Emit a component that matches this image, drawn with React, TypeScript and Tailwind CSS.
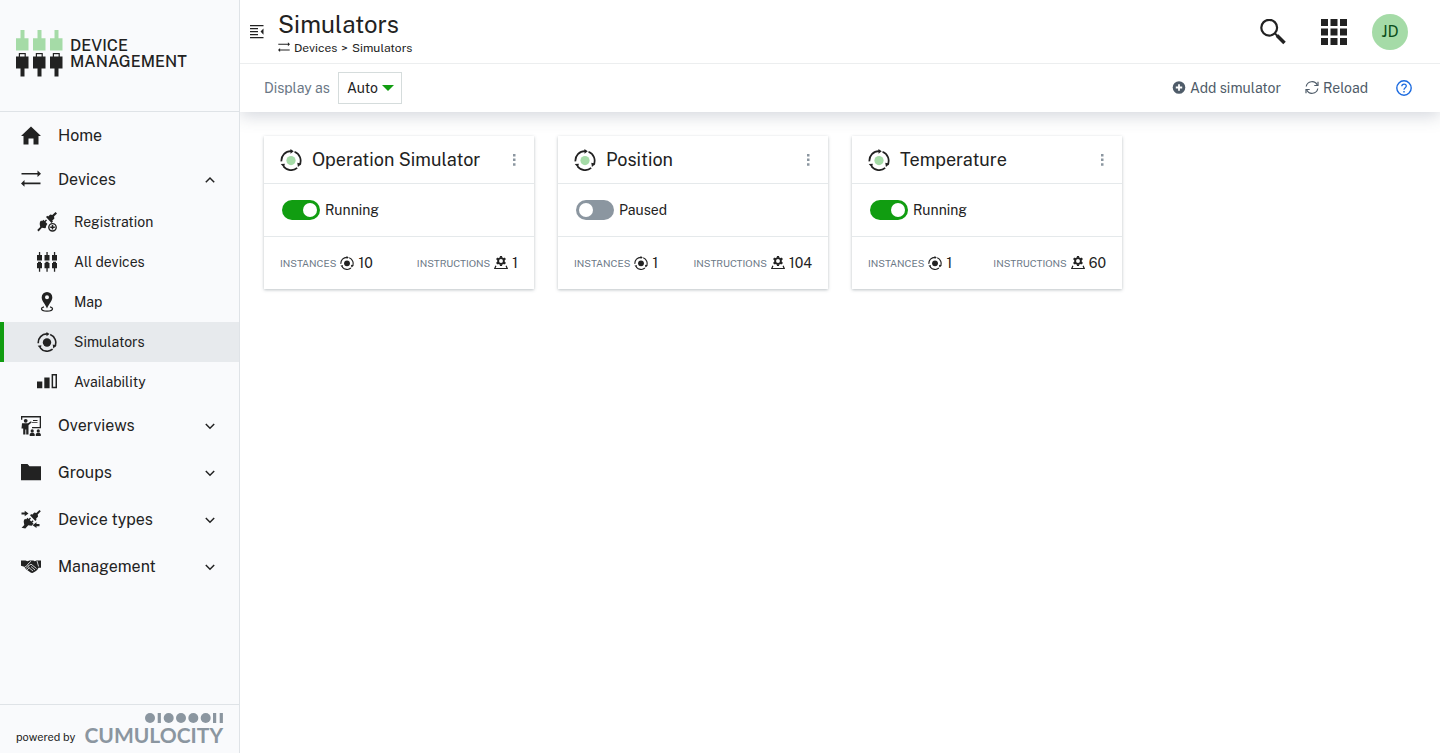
import type { ReactNode } from "react"
import { clsx } from "clsx"

type IconProps = { className?: string }

const LogoIcon = () => (
  <svg viewBox="0 0 47 47" className="h-[47px] w-[47px] shrink-0" aria-hidden="true">
    {[0, 17, 34].map((x) => (
      <g key={x} transform={`translate(${x} 0)`}>
        <path fill="#a5dba7" d="M4.500 0h4v8.300h4v12.200H0V8.300h4.500z" />
        <path fill="#222" d="M2.800 23h7v3.500h2.700v12h-4v8h-4v-8H0v-12h2.800z" />
        <path fill="#f9fafc" d="M4 24.200h4.600v2.300H4z" />
      </g>
    ))}
  </svg>
)

const HomeIcon = ({ className }: IconProps) => (
  <svg viewBox="0 0 20 20" className={className} fill="currentColor" aria-hidden="true">
    <path d="M10 .5 20 10h-2.500v8.500h-5v-6h-5v6h-5V10H0z" />
  </svg>
)

const ExchangeIcon = ({ className }: IconProps) => (
  <svg viewBox="0 0 20 20" className={className} fill="currentColor" aria-hidden="true">
    <path d="M.5 3h16V.5L20 3.800l-3.500 3.300V4.600H.5zM19.500 12.600h-16v-2.500L0 13.400l3.500 3.300v-2.500h16z" />
  </svg>
)

const RegistrationIcon = ({ className }: IconProps) => (
  <svg viewBox="0 0 20 20" className={className} aria-hidden="true">
    <g fill="currentColor">
      <path d="m9 5 1.300-1.300.8.800 2.200-2.100 2 .6L18.600 0 20 1.400 17 4.500l.4 2-2.200 2.200.8.800-1.500 1.500z" />
      <path d="m3 9.700 1.200-1.200.8.700 1.300-1.400 1.200 1.200 1.500-1.500 1 1-1.500 1.500 1.900 1.900c-1 1-1.500 2.200-1.500 3.600l-.7.700-3.300-.5L1.600 19.500.2 18.100l3-3-.5-3z" />
    </g>
    <circle cx="15.500" cy="15.300" r="3.700" fill="none" stroke="currentColor" strokeWidth="1.400" />
    <path d="M15.500 13v4.600M13.200 15.300h4.600" stroke="currentColor" strokeWidth="1.500" />
  </svg>
)

const DevicesIcon = ({ className }: IconProps) => (
  <svg viewBox="0 0 20 20" className={className} fill="currentColor" aria-hidden="true">
    {[0, 7.500, 15].map((x) => (
      <path
        key={x}
        transform={`translate(${x} 0)`}
        d="M1.900 0h1.300v3H5v5.600H0V3h1.900zM1 9.700h3V11h1v5.200H3.200v3.600H1.900v-3.600H0V11h1z"
      />
    ))}
  </svg>
)

const MapIcon = ({ className }: IconProps) => (
  <svg viewBox="0 0 20 20" className={className} aria-hidden="true">
    <path
      fill="currentColor"
      fillRule="evenodd"
      d="M10 0a5.300 5.300 0 0 1 5.300 5.400C15.300 9 12 11.500 10 16.500 8 11.500 4.700 9 4.700 5.400A5.300 5.300 0 0 1 10 0zm0 3.300a2 2 0 1 0 0 4 2 2 0 0 0 0-4z"
    />
    <path
      fill="none"
      stroke="currentColor"
      strokeWidth="1.300"
      d="M7 14.900c-1.500.4-2.500 1-2.500 1.800 0 1.300 2.500 2.400 5.500 2.400s5.500-1.100 5.500-2.400c0-.8-1-1.400-2.500-1.800"
    />
  </svg>
)

const SimulatorIcon = ({ className, dot = "currentColor" }: IconProps & { dot?: string }) => (
  <svg viewBox="0 0 20 20" className={className} aria-hidden="true">
    <circle cx="10" cy="10.500" r="4.200" fill={dot} />
    <path
      fill="none"
      stroke="currentColor"
      strokeWidth="1.600"
      d="M1.300 11.200A8.600 8.600 0 0 1 10 1.900M13.200 2.500a8.600 8.600 0 0 1 4.600 12M15.600 17.200a8.600 8.600 0 0 1-12.300-1.300"
    />
    <path fill="currentColor" d="m9.500 0 3 2-3 2.300zM19.600 13.500l-3.300 2.900-.6-3.900zM.7 13.700l3.700-.4L3.700 17z" />
  </svg>
)

const AvailabilityIcon = ({ className }: IconProps) => (
  <svg viewBox="0 0 20 20" className={className} fill="currentColor" aria-hidden="true">
    <path
      fillRule="evenodd"
      d="M0 9.500h5.300v6.700H0zM7.300 5.500h5.300v10.700H7.300zM14.600 2H20v14.200h-5.400zm1.500 1.500v11.200h2.400V3.500z"
    />
  </svg>
)

const OverviewsIcon = ({ className }: IconProps) => (
  <svg viewBox="0 0 20 20" className={className} fill="currentColor" aria-hidden="true">
    <path d="M0 0h20v12.300h-9v-1.200h7.700V1.500H1.300v2.300H0z" />
    <circle cx="4.700" cy="4.800" r="1.900" />
    <path d="M1 7.300h6l3-2 .8 1-3.300 2.900v9.300H5.200v-5h-.8v5H2.200v-6H.5z" />
    <path d="M12 4h4.500v.9H12zM11 6.200h5.500v.8H11z" />
    <circle cx="11.200" cy="14.900" r="1.600" />
    <circle cx="17.300" cy="14.900" r="1.600" />
    <path d="M8.700 20v-2l1.300-1.200h2.400l1.300 1.200v2zM14.800 20v-2l1.300-1.200h2.400l1.300 1.200v2z" />
  </svg>
)

const FolderIcon = ({ className }: IconProps) => (
  <svg viewBox="0 0 20 20" className={className} fill="currentColor" aria-hidden="true">
    <path d="M0 1h6.500l2 2.300H20v14H0z" />
  </svg>
)

const DeviceTypesIcon = ({ className }: IconProps) => (
  <svg viewBox="0 0 20 20" className={className} fill="currentColor" aria-hidden="true">
    <path d="m9 5.300 1.300-1.300.8.700 2.300-2.100 1.900.5L18.500 0l1.300 1.300-3.100 3.200.4 2.100-2.200 2.300.8.800-1.400 1.300z" />
    <path d="m3 9.900 1.200-1.200.8.700 1.500-1.600 1.200 1.200 1.300-1.400 1 1-1.300 1.400 1.600 1.600 1.300-1.300 1 1-1.300 1.300 1.200 1.200-1.900 1.900-3.300-.4-3 3.300L.6 17.700l2.700-2.800-.6-3.100z" />
    <path d="M.5 2.400h3.200V.7l3.800 2.800-3.800 2.800V4.600H.5zM18.500 14h-3v-1.700l-3.900 2.900 3.900 2.800v-1.700h3z" />
  </svg>
)

const HandshakeIcon = ({ className }: IconProps) => (
  <svg viewBox="0 0 20 20" className={className} aria-hidden="true">
    <path
      fill="currentColor"
      d="M0 3.500h4.500l2 .8 2-.9h3.800l1.500.8 1.700-.7H20v7.200h-2.500l-1.300 2.300-2 1.500-2.700 1.600-1.500-.3L5 12.300 3.300 9.800 0 8.800z"
    />
    <path
      fill="none"
      stroke="#f9fafc"
      strokeWidth=".8"
      d="M10 4.200 6.500 7.500c.8 1.300 2.300 1.100 3.500-.4l5.500 4.400M10 9.500l4 3.500M8.300 11l3.700 3M3.700 10.200l2.500-1.700 1 1-2.400 2.200M7.200 9.700l1.200 1-2.400 2.400M16 4l1.600 5.500"
    />
  </svg>
)

const GearIcon = ({ className }: IconProps) => (
  <svg viewBox="0 0 14 14" className={className} aria-hidden="true">
    <circle cx="7" cy="5" r="2.900" fill="none" stroke="currentColor" strokeWidth="1.900" />
    <path
      stroke="currentColor"
      strokeWidth="2.200"
      d="M7 0v1.800M7 8.200V10M2.600 2.400l1.600 1M9.800 6.600l1.600 1M2.600 7.600l1.600-1M9.800 3.400l1.600-1"
    />
    <path fill="none" stroke="currentColor" strokeWidth="1.200" d="M1.900 9.800.8 12.500h12.400l-1.100-2.700" />
  </svg>
)

const Chevron = ({ up }: { up?: boolean }) => (
  <svg viewBox="0 0 10 10" className="ml-auto h-2.5 w-2.5 shrink-0" fill="none" stroke="currentColor" strokeWidth="1.500" aria-hidden="true">
    <path d={up ? "M.8 7.200 5 3l4.200 4.200" : "M.8 3 5 7.200 9.200 3"} />
  </svg>
)

const CollapseIcon = () => (
  <svg viewBox="0 0 14 14" className="h-3.5 w-3.5" fill="currentColor" aria-hidden="true">
    <path d="M0 0h13.500v1.300H0zM0 3h8v1.300H0zM0 6h8v1.300H0zM0 9h8v1.300H0zM0 12h13.500v1.300H0zM13.500 3.500v6.300L10.500 6.600z" />
  </svg>
)

const SearchIcon = () => (
  <svg viewBox="0 0 26 26" className="h-[26px] w-[26px]" fill="none" stroke="currentColor" aria-hidden="true">
    <circle cx="9.200" cy="8.700" r="7.900" strokeWidth="2.200" />
    <path d="m15 14.500 2.500 2.500" strokeWidth="2" />
    <path d="m17 16.500 7.500 7.500" strokeWidth="3.600" />
  </svg>
)

const AppsIcon = () => (
  <svg viewBox="0 0 26 26" className="h-[26px] w-[26px]" fill="currentColor" aria-hidden="true">
    {[0, 9.500, 19].map((y) => [0, 9.500, 19].map((x) => <rect key={`${x}-${y}`} x={x} y={y} width="7" height="7" />))}
  </svg>
)

const PlusIcon = () => (
  <svg viewBox="0 0 14 14" className="h-3.5 w-3.5" aria-hidden="true">
    <circle cx="7" cy="6.500" r="6.300" fill="currentColor" />
    <path d="M7 3.300v6.400M3.800 6.500h6.400" stroke="#fff" strokeWidth="1.800" />
  </svg>
)

const ReloadIcon = () => (
  <svg viewBox="0 0 14 14" className="h-3.5 w-3.5" fill="none" stroke="currentColor" strokeWidth="1.200" aria-hidden="true">
    <path d="M1.200 5.500A5.900 5.900 0 0 1 12.300 4M12.800 7.500A5.900 5.900 0 0 1 1.700 9" />
    <path d="M13 .8v3.700H9.300M1 12.200V8.500h3.700" />
  </svg>
)

const HelpIcon = () => (
  <svg viewBox="0 0 16 16" className="h-4 w-4" fill="none" stroke="currentColor" aria-hidden="true">
    <circle cx="8" cy="8" r="7.200" strokeWidth="1.400" />
    <path d="M5.800 6.300c0-3 4.500-2.900 4.500-.2 0 1.700-2.300 1.600-2.300 3.600" strokeWidth="1.300" />
    <path d="M8 10.900v1.500" strokeWidth="1.400" />
  </svg>
)

const NavItem = ({ icon, label, chevron, className }: { icon: ReactNode; label: string; chevron?: "up" | "down"; className: string }) => (
  <button type="button" aria-expanded={chevron ? chevron === "up" : undefined} className={clsx("flex w-full items-center pr-6 pl-[21px] text-base", className)}>
    {icon}
    <span className="ml-[17px]">{label}</span>
    {chevron && <Chevron up={chevron === "up"} />}
  </button>
)

const iconSize = "h-5 w-5 shrink-0"

const deviceLinks = [
  { label: "Registration", icon: <RegistrationIcon className={iconSize} /> },
  { label: "All devices", icon: <DevicesIcon className={iconSize} /> },
  { label: "Map", icon: <MapIcon className={iconSize} /> },
  { label: "Simulators", icon: <SimulatorIcon className={iconSize} />, active: true },
  { label: "Availability", icon: <AvailabilityIcon className={iconSize} /> },
]

const groups = [
  { label: "Overviews", icon: <OverviewsIcon className={iconSize} /> },
  { label: "Groups", icon: <FolderIcon className={iconSize} /> },
  { label: "Device types", icon: <DeviceTypesIcon className={iconSize} /> },
  { label: "Management", icon: <HandshakeIcon className={iconSize} /> },
]

const simulators = [
  { name: "Operation Simulator", running: true, instances: 10, instructions: 1 },
  { name: "Position", running: false, instances: 1, instructions: 104 },
  { name: "Temperature", running: true, instances: 1, instructions: 60 },
]

const Sidebar = () => (
  <aside className="relative z-10 flex w-60 shrink-0 flex-col border-r border-[#dfe3e7] bg-[#f9fafc]">
    <div className="flex h-28 items-start gap-[7px] border-b border-[#dfe3e7] pt-[30px] pl-4">
      <LogoIcon />
      <div className="pt-2 text-base leading-4 font-medium">
        <div>DEVICE</div>
        <div>MANAGEMENT</div>
      </div>
    </div>
    <nav className="flex-1">
      <NavItem className="h-12" label="Home" icon={<HomeIcon className={iconSize} />} />
      <NavItem className="h-10" label="Devices" chevron="up" icon={<ExchangeIcon className={iconSize} />} />
      <ul className="pt-0.5">
        {deviceLinks.map(({ label, icon, active }) => (
          <li key={label}>
            <a
              href="#"
              aria-current={active ? "page" : undefined}
              className={clsx(
                "flex h-10 items-center gap-[17px] border-l-4 pl-[33px] text-sm",
                active ? "border-[#119d11] bg-[#e7eaed]" : "border-transparent"
              )}
            >
              {icon}
              {label}
            </a>
          </li>
        ))}
      </ul>
      {groups.map(({ label, icon }) => (
        <NavItem key={label} className="h-[47px]" label={label} chevron="down" icon={icon} />
      ))}
    </nav>
    <footer className="flex h-[49px] items-end gap-[9px] border-t border-[#dfe3e7] pb-1.5 pl-4">
      <span className="text-[11px] leading-5">powered by</span>
      <div className="flex flex-col items-end text-[#8b96a0]">
        <svg viewBox="0 0 78 10" className="h-2.5 w-[78px]" fill="currentColor" aria-hidden="true">
          {[5, 23.700, 36, 48.300, 60.700].map((cx) => (
            <circle key={cx} cx={cx} cy="5" r="5" />
          ))}
          <path d="M12.700 0h3.200v10h-3.200zM68 0h3.200v10H68zM74.700 0h3.200v10h-3.200z" />
        </svg>
        <span className="font-['Lato',sans-serif] text-[21px] leading-6 font-bold">CUMULOCITY</span>
      </div>
    </footer>
  </aside>
)

const Header = () => (
  <header className="relative bg-white shadow-[0_4px_16px_rgba(60,75,100,0.22)]">
    <div className="flex h-16 items-center border-b border-[#eceeef] pr-8 pl-2.5">
      <button type="button" aria-label="Toggle navigation">
        <CollapseIcon />
      </button>
      <div className="ml-3.5">
        <h1 className="text-2xl leading-8">Simulators</h1>
        <div className="flex items-center gap-1 text-xs leading-4">
          <ExchangeIcon className="h-3 w-3" />
          <a href="#">Devices</a>
          <span>&gt;</span>
          <span>Simulators</span>
        </div>
      </div>
      <div className="ml-auto flex items-center">
        <button type="button" aria-label="Search">
          <SearchIcon />
        </button>
        <button type="button" aria-label="Applications" className="ml-[35px]">
          <AppsIcon />
        </button>
        <button type="button" className="ml-[25px] h-9 w-9 rounded-full bg-[#a5dba7] text-base text-[#0b4f1b]">
          JD
        </button>
      </div>
    </div>
    <div className="flex h-12 items-center pr-7 pl-6 text-sm">
      <label htmlFor="display" className="text-[#6b7886]">
        Display as
      </label>
      <div className="relative ml-2 flex items-center">
        <select id="display" className="h-8 w-16 appearance-none border border-[#d5dcdc] bg-white pl-2 text-sm">
          <option>Auto</option>
        </select>
        <svg viewBox="0 0 12 6" className="pointer-events-none absolute right-2 h-1.5 w-3 fill-[#119d11]" aria-hidden="true">
          <path d="M0 0h12L6 6z" />
        </svg>
      </div>
      <div className="ml-auto flex items-center text-[#4f5c69]">
        <button type="button" className="flex items-center gap-1">
          <PlusIcon />
          Add simulator
        </button>
        <button type="button" className="ml-6 flex items-center gap-1">
          <ReloadIcon />
          Reload
        </button>
        <button type="button" aria-label="Help" className="ml-7 text-[#1c6be0]">
          <HelpIcon />
        </button>
      </div>
    </div>
  </header>
)

const SimulatorCard = ({ name, running, instances, instructions }: (typeof simulators)[number]) => (
  <article className="bg-white shadow-[0_1px_3px_rgba(60,80,90,0.35)]">
    <div className="flex h-12 items-center border-b border-[#e5e9eb] px-4">
      <SimulatorIcon className="h-[22px] w-[22px] shrink-0" dot="#a5dba7" />
      <h2 className="ml-2.5 text-lg">{name}</h2>
      <button type="button" aria-label={`${name} options`} className="ml-auto text-[#8b96a0]">
        <svg viewBox="0 0 8 12" className="h-3 w-2" fill="currentColor" aria-hidden="true">
          <path d="M3 0h2.500v2.500H3zM3 4.600h2.500v2.500H3zM3 9.200h2.500v2.500H3z" />
        </svg>
      </button>
    </div>
    <label className="flex h-[53px] items-center gap-[5px] border-b border-[#e5e9eb] pl-[18px] text-sm">
      <input
        type="checkbox"
        role="switch"
        defaultChecked={running}
        className="flex h-5 w-[38px] appearance-none items-center rounded-full bg-[#8b96a0] px-[3px] before:h-3.5 before:w-3.5 before:rounded-full before:bg-white checked:justify-end checked:bg-[#119d11]"
      />
      {running ? "Running" : "Paused"}
    </label>
    <div className="flex h-[52px] items-center justify-between px-4 text-sm">
      <div className="flex items-center gap-1">
        <span className="text-[10px] leading-5 text-[#6b7886]">INSTANCES</span>
        <SimulatorIcon className="h-3.5 w-3.5" />
        {instances}
      </div>
      <div className="flex items-center gap-1">
        <span className="text-[10px] leading-5 text-[#6b7886]">INSTRUCTIONS</span>
        <GearIcon className="h-3.5 w-3.5" />
        {instructions}
      </div>
    </div>
  </article>
)

const App = () => {
  return (
    <div className="flex min-h-screen bg-white font-['Public_Sans',Inter,sans-serif] text-[#222]">
      <Sidebar />
      <main className="min-w-0 flex-1">
        <Header />
        <section className="grid grid-cols-2 gap-6 p-6 lg:grid-cols-4">
          {simulators.map((simulator) => (
            <SimulatorCard key={simulator.name} {...simulator} />
          ))}
        </section>
      </main>
    </div>
  )
}

export default App
